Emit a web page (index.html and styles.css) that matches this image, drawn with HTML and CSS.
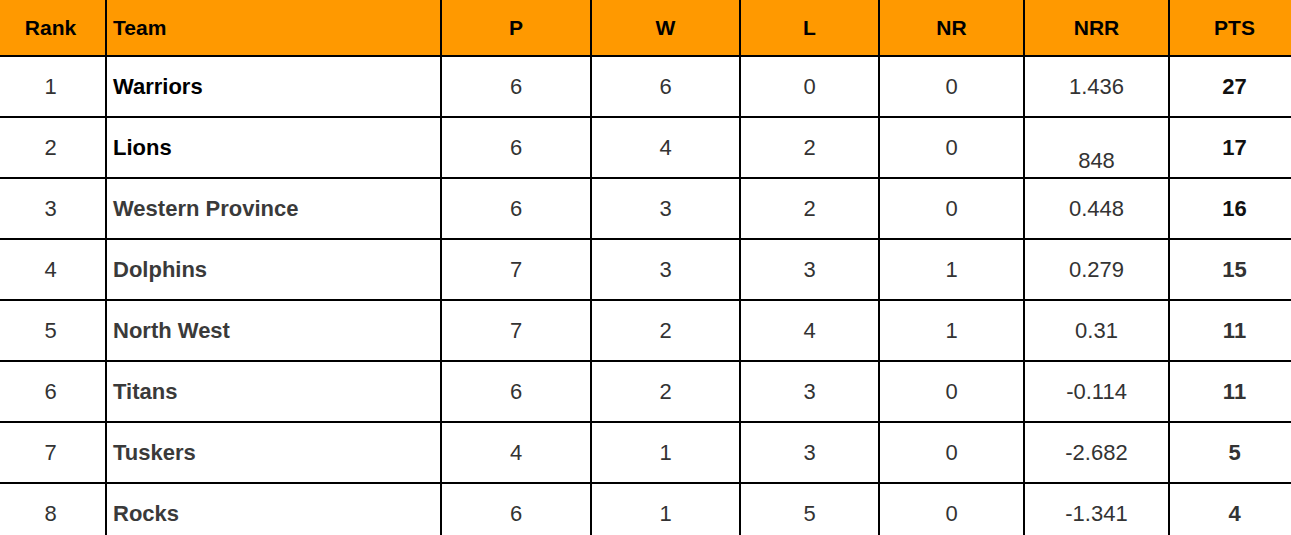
FILE: index.html
```html
<!DOCTYPE html>
<html>
<head>
<meta charset="utf-8">
<link rel="stylesheet" href="styles.css">
</head>
<body>
<table class="standings">
  <colgroup>
    <col class="c-rank"><col class="c-team"><col class="c-p"><col class="c-w"><col class="c-l"><col class="c-nr"><col class="c-nrr"><col class="c-pts">
  </colgroup>
  <thead>
    <tr><th class="rank">Rank</th><th class="team">Team</th><th>P</th><th>W</th><th>L</th><th>NR</th><th>NRR</th><th>PTS</th></tr>
  </thead>
  <tbody>
    <tr class="top"><td class="rank">1</td><td class="team">Warriors</td><td>6</td><td>6</td><td>0</td><td>0</td><td>1.436</td><td class="pts">27</td></tr>
    <tr class="top"><td class="rank">2</td><td class="team">Lions</td><td>6</td><td>4</td><td>2</td><td>0</td><td class="low">848</td><td class="pts">17</td></tr>
    <tr><td class="rank">3</td><td class="team">Western Province</td><td>6</td><td>3</td><td>2</td><td>0</td><td>0.448</td><td class="pts dark">16</td></tr>
    <tr><td class="rank">4</td><td class="team">Dolphins</td><td>7</td><td>3</td><td>3</td><td>1</td><td>0.279</td><td class="pts">15</td></tr>
    <tr><td class="rank">5</td><td class="team">North West</td><td>7</td><td>2</td><td>4</td><td>1</td><td>0.31</td><td class="pts">11</td></tr>
    <tr><td class="rank">6</td><td class="team">Titans</td><td>6</td><td>2</td><td>3</td><td>0</td><td>-0.114</td><td class="pts">11</td></tr>
    <tr><td class="rank">7</td><td class="team">Tuskers</td><td>4</td><td>1</td><td>3</td><td>0</td><td>-2.682</td><td class="pts">5</td></tr>
    <tr><td class="rank">8</td><td class="team">Rocks</td><td>6</td><td>1</td><td>5</td><td>0</td><td>-1.341</td><td class="pts">4</td></tr>
  </tbody>
</table>
</body>
</html>
```
FILE: styles.css
```css
html, body {
  margin: 0;
  padding: 0;
  background: #fff;
  overflow: hidden;
}
.standings {
  border-collapse: collapse;
  table-layout: fixed;
  width: 1299px;
  font-family: "Liberation Sans", Arial, sans-serif;
}
.c-rank { width: 106px; }
.c-team { width: 335px; }
.c-p { width: 150px; }
.c-w { width: 149px; }
.c-l { width: 139px; }
.c-nr { width: 145px; }
.c-nrr { width: 145px; }
.c-pts { width: 130px; }

.standings th,
.standings td {
  border: 2px solid #000;
  text-align: center;
  padding: 0;
}
.standings tr > :first-child { border-left: none; }
.standings tr > :last-child { border-right: none; }
.standings thead th { border-top: none; }

.standings th {
  background: #ff9900;
  color: #000;
  font-weight: bold;
  font-size: 21px;
  height: 55px;
}
.standings td {
  height: 59px;
  font-size: 22px;
  color: #333;
}
.standings .rank { padding-right: 4px; }
.standings th.team {
  color: #000;
  text-align: left;
  padding-left: 6px;
}
.standings td.team {
  text-align: left;
  padding-left: 6px;
  font-weight: bold;
  color: #3a3a3a;
}
.standings tr.top td.team { color: #000; }
.standings .pts {
  font-weight: bold;
  color: #333;
}
.standings tr.top .pts,
.standings .pts.dark { color: #111; }
.standings td.low {
  vertical-align: bottom;
  padding-bottom: 3px;
  height: 56px;
}
```
